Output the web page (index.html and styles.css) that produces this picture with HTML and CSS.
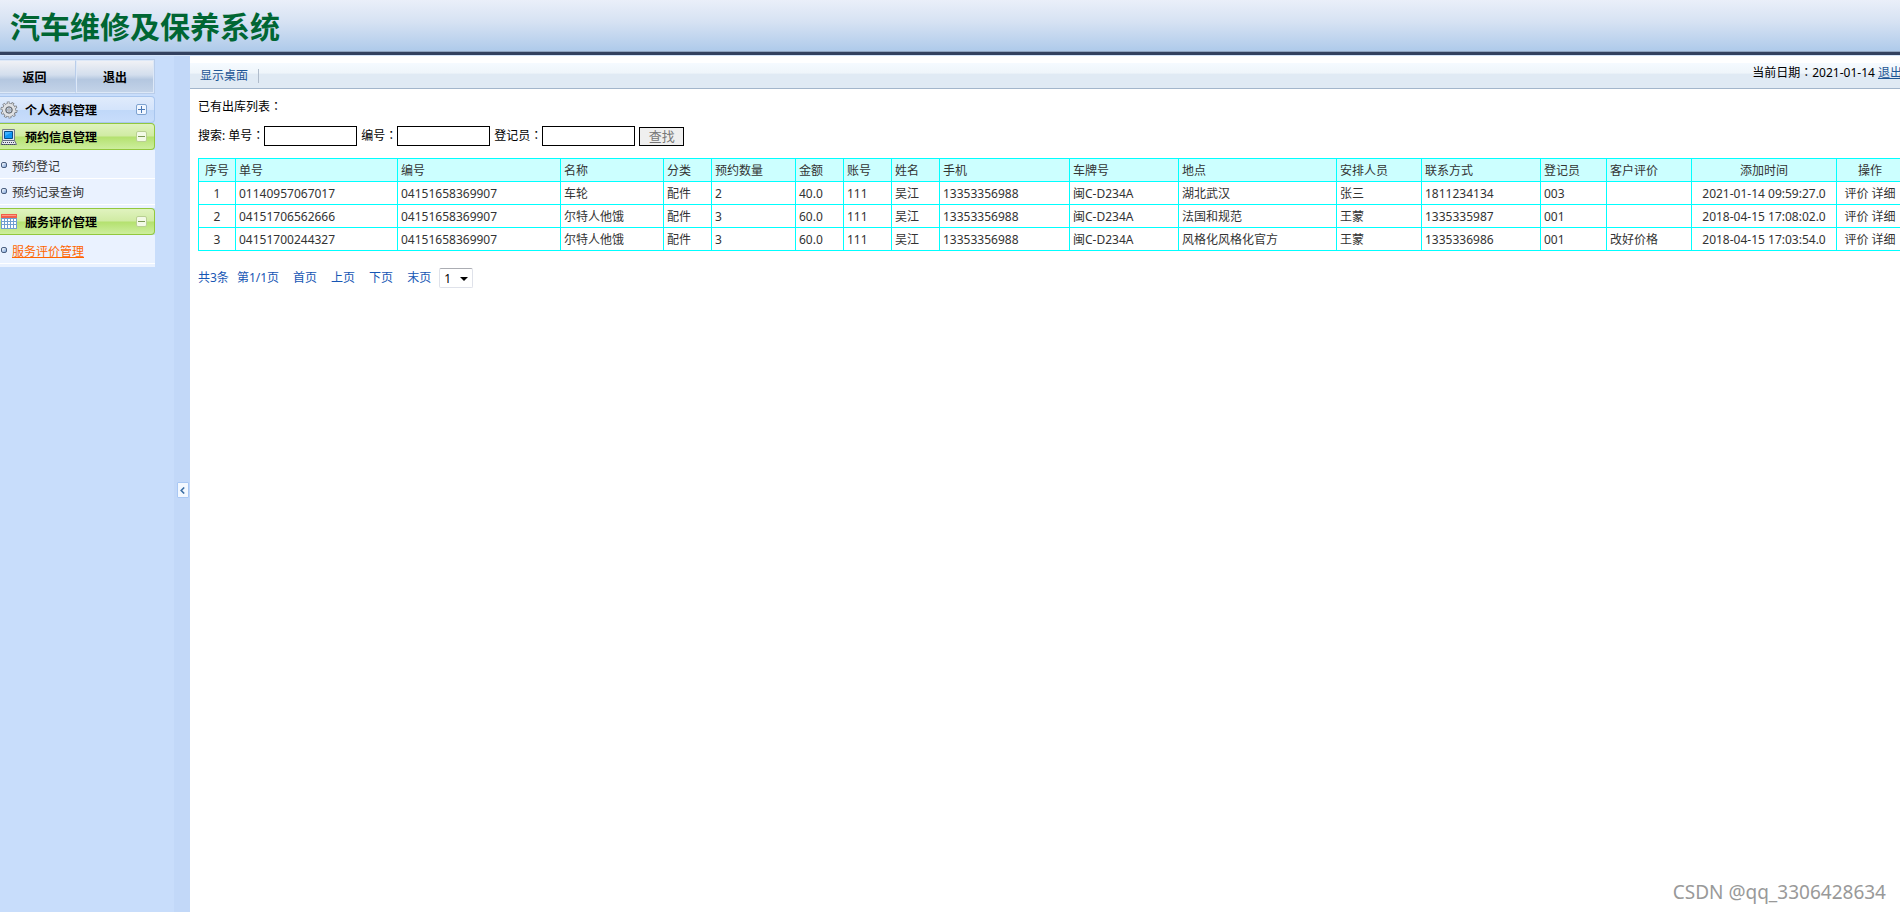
FILE: index.html
```html
<!DOCTYPE html>
<html lang="zh-CN">
<head>
<meta charset="utf-8">
<title>汽车维修及保养系统</title>
<link rel="stylesheet" href="styles.css">
</head>
<body>
<header class="banner"><h1>汽车维修及保养系统</h1></header>
<div class="layout">
  <aside class="sidebar">
    <div class="actions">
      <button type="button">返回</button>
      <button type="button">退出</button>
    </div>
    <nav class="menu">
      <button type="button" class="group closed" aria-expanded="false">
        <svg class="icon" width="18" height="18" viewBox="0 0 18 18"><circle cx="9" cy="9" r="7.300" fill="none" stroke="#6d7176" stroke-width="2.400" stroke-dasharray="2.600 1.990"/><circle cx="9" cy="9" r="5" fill="none" stroke="#6d7176" stroke-width="4.200"/><circle cx="9" cy="9" r="5" fill="none" stroke="#dfe1e4" stroke-width="2.800"/><circle cx="9" cy="9" r="7" fill="none" stroke="#dfe1e4" stroke-width="1.600" stroke-dasharray="1.600 2.800" stroke-dashoffset="-.5"/><circle cx="9" cy="9" r="3" fill="#c3d3ea" stroke="#6d7176"/><circle cx="9" cy="9" r="1.200" fill="#fff" stroke="#999"/></svg>
        <span>个人资料管理</span>
        <svg class="toggle" width="11" height="11" viewBox="0 0 11 11"><rect x=".5" y=".5" width="10" height="10" rx="1.500" fill="#f0f6ff" stroke="#7fa3d0"/><path d="M2 5.500h7M5.500 2v7" stroke="#4a78b5"/></svg>
      </button>
      <button type="button" class="group open" aria-expanded="true">
        <svg class="icon" width="18" height="18" viewBox="0 0 18 18"><path d="M2.500 1.500h12v11h-12z" fill="#dfe5ec" stroke="#777f88"/><path d="M4.500 3.500h8v7h-8z" fill="#0f95f5" stroke="#07508c"/><path d="M5 4h7L5 8z" fill="#3fb2ff"/><path d="M2.500 12.500h12l2 4H1z" fill="#e6e8ee" stroke="#666d80"/><path d="M3 14.500h12M2 16.500h14" stroke="#3d4459" stroke-dasharray="1 1"/></svg>
        <span>预约信息管理</span>
        <svg class="toggle" width="11" height="11" viewBox="0 0 11 11"><rect x=".5" y=".5" width="10" height="10" rx="1.500" fill="#f3fae6" stroke="#b9cf93"/><path d="M2 5.500h7" stroke="#7d9a55"/></svg>
      </button>
      <ul>
        <li><a href="#">预约登记</a></li>
        <li><a href="#">预约记录查询</a></li>
      </ul>
      <button type="button" class="group open" aria-expanded="true">
        <svg class="icon" width="18" height="18" viewBox="0 0 18 18"><path d="M1 2h16v14H1z" fill="#6f9fd0"/><path d="M1 1h16v4H1z" fill="#f0604a"/><path d="M2 2h14v1H2z" fill="#ff9a85"/><path d="M2 6h2v2H2zM5 6h2v2H5zM8 6h2v2H8zM11 6h2v2h-2zM14 6h2v2h-2zM2 9h2v2H2zM5 9h2v2H5zM8 9h2v2H8zM11 9h2v2h-2zM14 9h2v2h-2zM2 12h2v3H2zM5 12h2v3H5zM8 12h2v3H8zM11 12h2v3h-2zM14 12h2v3h-2z" fill="#fff"/></svg>
        <span>服务评价管理</span>
        <svg class="toggle" width="11" height="11" viewBox="0 0 11 11"><rect x=".5" y=".5" width="10" height="10" rx="1.500" fill="#f3fae6" stroke="#b9cf93"/><path d="M2 5.500h7" stroke="#7d9a55"/></svg>
      </button>
      <ul>
        <li><a href="#" class="current">服务评价管理</a></li>
      </ul>
    </nav>
  </aside>
  <div class="splitter">
    <button type="button" aria-label="收起菜单"><svg width="5" height="7" viewBox="0 0 5 7"><path d="M4.200 .5 1.200 3.500l3 3" fill="none" stroke="#3c6fa5" stroke-width="1.600"/></svg></button>
  </div>
  <main class="main">
    <div class="toolbar">
      <a href="#" class="desktop">显示桌面</a>
      <div class="session">当前日期<span class="colon" lang="zh-TW">：</span>2021-01-14 <a href="#">退出</a></div>
    </div>
    <div class="content">
      <p class="caption">已有出库列表<span class="colon" lang="zh-TW">：</span></p>
      <form class="search">
        <span class="lead">搜索:</span>
        <label for="order">单号<span class="colon" lang="zh-TW">：</span></label><input id="order" type="text">
        <label for="code">编号<span class="colon" lang="zh-TW">：</span></label><input id="code" type="text">
        <label for="clerk">登记员<span class="colon" lang="zh-TW">：</span></label><input id="clerk" type="text">
        <button type="button">查找</button>
      </form>
      <table class="grid">
        <colgroup>
          <col class="w-index"><col class="w-number"><col class="w-code"><col class="w-name"><col class="w-short"><col class="w-amount"><col class="w-short"><col class="w-short"><col class="w-short"><col class="w-phone"><col class="w-plate"><col><col class="w-medium"><col class="w-contact"><col class="w-clerk"><col class="w-medium"><col class="w-time"><col class="w-ops">
        </colgroup>
        <thead>
          <tr><th class="mid">序号</th><th>单号</th><th>编号</th><th>名称</th><th>分类</th><th>预约数量</th><th>金额</th><th>账号</th><th>姓名</th><th>手机</th><th>车牌号</th><th>地点</th><th>安排人员</th><th>联系方式</th><th>登记员</th><th>客户评价</th><th class="mid">添加时间</th><th class="mid">操作</th></tr>
        </thead>
        <tbody>
          <tr><td class="mid">1</td><td>01140957067017</td><td>04151658369907</td><td>车轮</td><td>配件</td><td>2</td><td>40.0</td><td>111</td><td>吴江</td><td>13353356988</td><td>闽C-D234A</td><td>湖北武汉</td><td>张三</td><td>1811234134</td><td>003</td><td></td><td class="mid">2021-01-14 09:59:27.0</td><td class="mid"><a href="#">评价</a> <a href="#">详细</a></td></tr>
          <tr><td class="mid">2</td><td>04151706562666</td><td>04151658369907</td><td>尔特人他饿</td><td>配件</td><td>3</td><td>60.0</td><td>111</td><td>吴江</td><td>13353356988</td><td>闽C-D234A</td><td>法国和规范</td><td>王蒙</td><td>1335335987</td><td>001</td><td></td><td class="mid">2018-04-15 17:08:02.0</td><td class="mid"><a href="#">评价</a> <a href="#">详细</a></td></tr>
          <tr><td class="mid">3</td><td>04151700244327</td><td>04151658369907</td><td>尔特人他饿</td><td>配件</td><td>3</td><td>60.0</td><td>111</td><td>吴江</td><td>13353356988</td><td>闽C-D234A</td><td>风格化风格化官方</td><td>王蒙</td><td>1335336986</td><td>001</td><td>改好价格</td><td class="mid">2018-04-15 17:03:54.0</td><td class="mid"><a href="#">评价</a> <a href="#">详细</a></td></tr>
        </tbody>
      </table>
      <div class="pager">
        <div class="total"><span>共3条</span><span>第1/1页</span></div>
        <a href="#">首页</a><a href="#">上页</a><a href="#">下页</a><a href="#">末页</a>
        <div class="picker">
          <select aria-label="页码"><option>1</option></select>
          <svg width="8" height="4" viewBox="0 0 8 4"><path d="M0 0h8L4 4z"/></svg>
        </div>
      </div>
    </div>
    <div class="watermark">CSDN @qq_3306428634</div>
  </main>
</div>
</body>
</html>
```
FILE: styles.css
```css
* { box-sizing: border-box; }

body {
  margin: 0;
  min-height: 100vh;
  display: flex;
  flex-direction: column;
  overflow: hidden;
  background: #fff;
  color: #000;
  font: 12px/20px "Noto Sans", "Noto Sans CJK SC", sans-serif;
  text-spacing-trim: space-all;
}

button, input, select { font: inherit; color: inherit; }
a { text-decoration: none; color: inherit; }
.colon { font-family: "Noto Sans CJK TC", sans-serif; line-height: 1; }

.banner {
  height: 56px;
  padding: 6px 10px;
  background: linear-gradient(#eaeff9, #d6e2f3 40%, #a9c7e9);
  border-bottom: 1px solid #d5e5fa;
  box-shadow: inset 0 -3px #33415f, inset 0 -4px #8fa3be;
}
.banner h1 {
  margin: 0;
  font-size: 30px;
  line-height: 42px;
  font-weight: bold;
  color: #006633;
}

.layout { flex: 1; display: flex; }

.sidebar { width: 174px; padding-top: 3px; background: #c8ddfb; flex: none; }

.actions {
  display: flex;
  width: 155px;
  height: 35px;
  border: solid #b9cdea;
  border-width: 1px 1px 1px 0;
}
.actions button {
  flex: 1;
  padding: 2px 0 0;
  border: 1px solid #dde8f7;
  background: linear-gradient(#f0f1f5, #d3deed 45%, #b4c7e0 60%, #c3d3e8);
  font-weight: bold;
}
.actions button:first-child {
  flex: 0 0 76px;
  padding-right: 6px;
  border-left: 0;
  border-right-color: #b9cdea;
}

.menu { width: 155px; padding-top: 2px; }
.group {
  display: flex;
  align-items: center;
  width: 100%;
  height: 27px;
  padding: 0 7px 0 0;
  border: 1px solid;
  border-left: 0;
  border-radius: 0 4px 4px 0;
  font-weight: bold;
}
.group span { flex: 1; padding: 2px 0 0 7px; text-align: left; }
.closed { border-color: #a9c6ee; background: linear-gradient(#e0ebfc, #d4e4fb 50%, #c0d8f9 52%, #c8ddfb); }
.open { border-color: #92c83e; background: linear-gradient(#e0f3bf, #d0eba3 48%, #b4e16f 52%, #cdee9e); }

.menu ul { margin: 0; padding: 3px 0; list-style: none; background: #eaf2ff; }
.menu li {
  display: flex;
  align-items: center;
  height: 26px;
  padding-top: 2px;
  border-bottom: 1px solid #fff;
  color: #333;
}
.menu li::before {
  content: "";
  width: 6px;
  height: 6px;
  margin: 0 5px 3px 1px;
  border: 1px solid #4a5f80;
  border-radius: 2px;
  background: linear-gradient(135deg, #fff, #7fa6dc);
  box-sizing: border-box;
}
.menu .current { color: #ff6600; text-decoration: underline; }

.splitter {
  flex: none;
  display: flex;
  align-items: center;
  justify-content: center;
  width: 16px;
  padding: 12px 1px 0 2px;
  background: #c2d8f8;
}
.splitter button {
  display: flex;
  align-items: center;
  justify-content: center;
  width: 12px;
  height: 16px;
  padding: 0;
  border: 1px solid #a9c8f4;
  border-radius: 1px;
  background: #f2f8ff;
}

.main { flex: 1; min-width: 0; display: flex; flex-direction: column; padding-top: 7px; overflow: hidden; }

.toolbar {
  display: flex;
  justify-content: space-between;
  height: 26px;
  margin-right: -2px;
  padding-left: 10px;
  background: linear-gradient(#f5faff, #eff5fa 40%, #e0eaf4 45%, #e0eaf4);
  border-bottom: 1px solid #a3b6cb;
}
.desktop { align-self: center; padding-right: 10px; border-right: 1px solid #b0bccb; line-height: 14px; color: #1d5595; }
.session a { color: #1d5595; text-decoration: underline; }

.content { flex: 1; padding: 8px 0 0 8px; }
.caption { margin: 0 0 9px; }

.search { display: flex; align-items: center; }
.lead { margin-right: 3px; }
.search input {
  width: 93px;
  height: 20px;
  margin-right: 4px;
  padding: 0 2px;
  border: 1px solid #000;
  border-radius: 0;
}
.search button {
  width: 45px;
  height: 19px;
  padding: 0;
  border: 1px solid #000;
  background: #efefef;
  color: #777;
  font-size: 13px;
  line-height: 16px;
}

.grid {
  width: calc(100% + 4px);
  margin-top: 12px;
  table-layout: fixed;
  border-collapse: collapse;
  color: #333;
}
.grid th, .grid td {
  height: 23px;
  padding: 1px 0 0 3px;
  border: 1px solid #00ffff;
  text-align: left;
  font-weight: normal;
  white-space: nowrap;
}
.grid th { background: #ccffff; }
.grid .mid { padding-left: 0; text-align: center; }
.w-index { width: 37px; }
.w-number { width: 162px; }
.w-code { width: 163px; }
.w-name { width: 103px; }
.w-short { width: 48px; }
.w-amount { width: 84px; }
.w-medium { width: 85px; }
.w-phone { width: 130px; }
.w-plate { width: 109px; }
.w-contact { width: 119px; }
.w-clerk { width: 66px; }
.w-time { width: 145px; }
.w-ops { width: 67px; }

.pager { display: flex; align-items: center; gap: 14px; margin-top: 17px; color: #1656b4; }
.total { display: flex; gap: 8px; }
.picker { position: relative; margin-left: -6px; }
.picker select {
  display: block;
  width: 34px;
  height: 20px;
  padding: 0 4px;
  border: 1px solid #dfe2ea;
  border-top-color: #abadb3;
  border-radius: 2px;
  background: #fff;
  color: #000;
  appearance: none;
}
.picker svg { position: absolute; right: 5px; top: 9px; pointer-events: none; }

.watermark {
  align-self: flex-end;
  padding: 0 14px 7px 0;
  font-size: 19px;
  line-height: 26px;
  color: #999;
}
```
